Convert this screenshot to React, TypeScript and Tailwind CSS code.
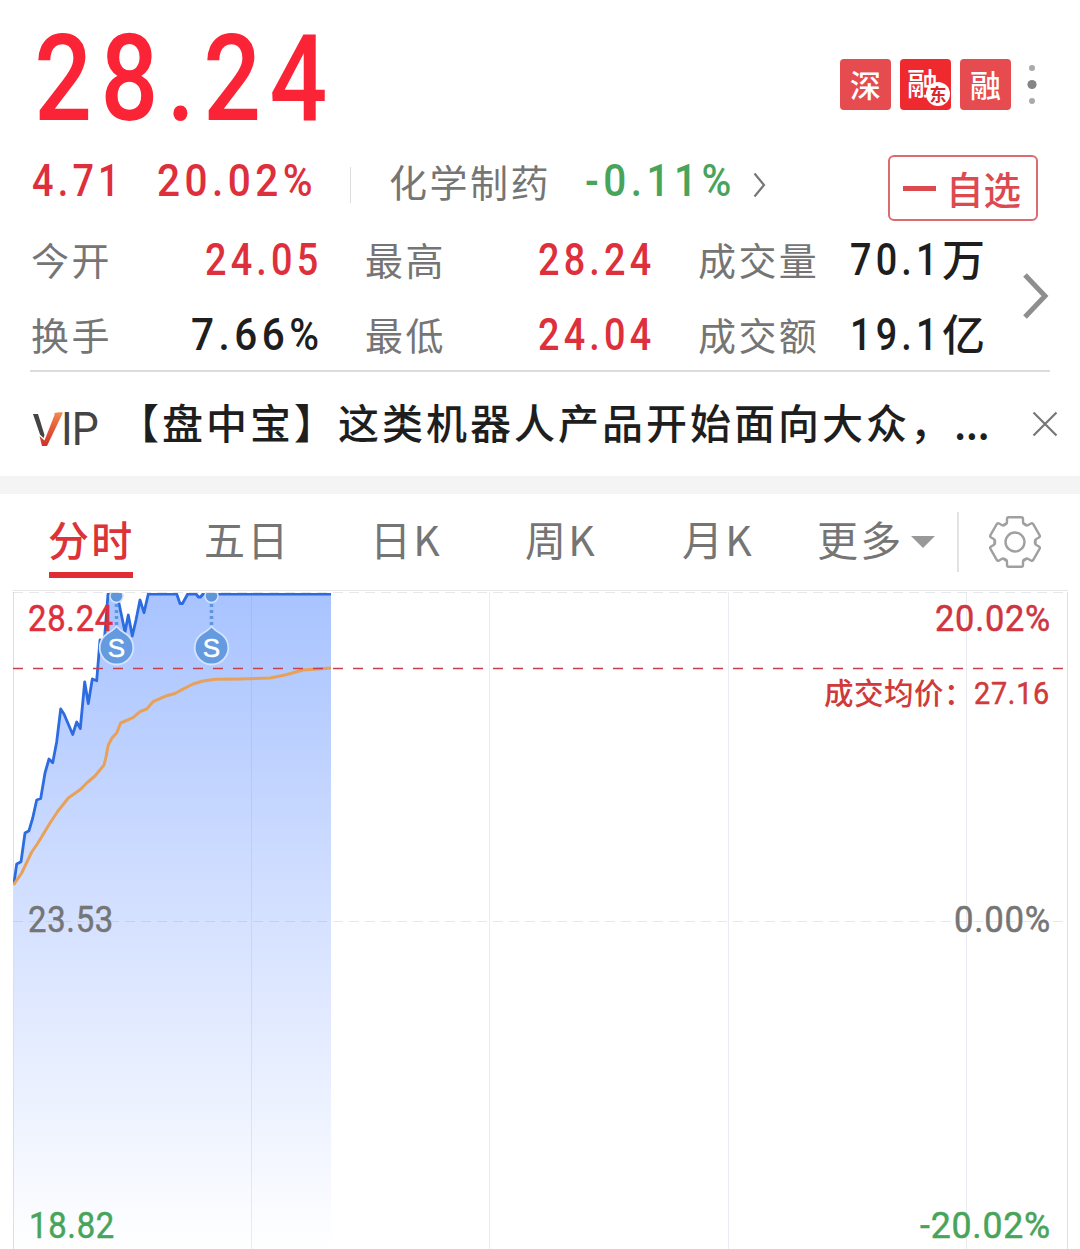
import { clsx } from 'clsx';

const TABS = [
  { label: '五日', width: 'w-[166px]' },
  { label: '日K', width: 'w-[155px]' },
  { label: '周K', width: 'w-[157px]' },
  { label: '月K', width: 'w-[135px]' },
];

const PRICE_LINE =
  '14,883 16.7,864 21,861.7 25,833 29,830.7 32.7,818 36.7,800 40.7,798.5 45,773 49,759 52.7,762.7 56.7,741.7 60.7,709 64,714 72.7,734.5 76.7,722 80.3,728.5 84.7,682 88.3,703.5 92.3,679 96.7,680.7 100,640 104,645 108,594 117,594 125,632 128.3,615 132.3,636 136,620 140,600 144,612.7 148.3,594 176.7,594 180,603.5 182.5,603.5 187.7,594 196,594 198.5,597 200.5,597 203,594 331,594';

const AVG_LINE =
  '13.5,885 21.7,873 31.7,852 37.3,844 50,823 58,811 68.3,798 81,789 86.7,783 95,776 104,765 106,757 108.3,745 112,738 116.7,733 120.7,723 133,717.7 140,711.7 146.7,709 153,701.7 166.7,695.7 175,693.5 180,690.7 193,684 203,681 215,679.3 240,679 270,678 285,675 303,670 331,668';

function Num({ children, className = 'text-[45px] tracking-[5px]' }: { children: string; className?: string }) {
  return (
    <span
      className={clsx(
        "block origin-left whitespace-nowrap font-['Roboto',sans-serif] font-medium leading-none",
        children.endsWith('%') ? 'scale-x-[0.9]' : 'scale-x-[0.84]',
        className,
      )}
    >
      {children}
    </span>
  );
}

function Badge({ children }: { children: string }) {
  return (
    <div className="flex h-[51px] w-[51px] items-center justify-center rounded-[4px] bg-[#e64b50] pb-[2px] text-[31px] font-medium leading-none text-white">
      {children}
    </div>
  );
}

function Header() {
  return (
    <header className="px-[31px]">
      <div className="flex h-[140px] justify-between pt-[19px]">
        <Num className="pl-[4px] text-[121px] tracking-[10px] text-[#fa2436]">28.24</Num>
        <div className="flex gap-[9px] pr-[12px] pt-[40px]">
          <Badge>深</Badge>
          <div className="relative h-[51px] w-[51px] rounded-[4px] bg-[#ee2a2e] pl-[7px] pt-[7px] text-[31px] font-medium leading-none text-white">
            融
            <span className="absolute left-[26px] top-[23px] flex h-6 w-6 items-center justify-center rounded-full bg-white pb-px text-[17px] font-bold leading-none text-[#d8262b]">
              东
            </span>
          </div>
          <Badge>融</Badge>
          <svg className="ml-[7px] h-[51px] w-[10px]" viewBox="0 0 10 51">
            <circle cx="5" cy="9" r="3" fill="#aaa" />
            <circle cx="5" cy="25.5" r="4.6" fill="#858585" />
            <circle cx="5" cy="42" r="3" fill="#aaa" />
          </svg>
        </div>
      </div>

      <div className="flex h-[86px] items-start pt-[18px]">
        <div className="w-[126px] pl-px text-[#dd2f3c]">
          <Num>4.71</Num>
        </div>
        <div className="w-[193px] text-[#dd2f3c]">
          <Num>20.02%</Num>
        </div>
        <div className="mt-[9px] h-[36px] w-px bg-[#ddd]" />
        <div className="ml-[38px] mt-[4px] w-[196px] text-[38px] leading-none tracking-[2.5px] text-[#757575]">化学制药</div>
        <div className="w-[168px] text-[#48a45a]">
          <Num>-0.11%</Num>
        </div>
        <svg className="mt-[14px] h-[26px] w-[13px]" viewBox="0 0 13 26" fill="none" stroke="#777" strokeWidth="2.2">
          <path d="M1.5 1.5 L11 13 L1.5 24.5" />
        </svg>
        <button className="-mt-[3px] ml-[122px] flex h-[66px] w-[150px] shrink-0 items-center rounded-[6px] border-2 border-[#dd6a6f] pl-[13px] text-[#dc4a50]">
          <span className="h-[5px] w-[33px] bg-[#dc4a50]" />
          <span className="ml-[10px] text-[37.5px] font-medium leading-none">自选</span>
        </button>
      </div>
    </header>
  );
}

function StatLabel({ children }: { children: string }) {
  return <div className="pt-[3px] text-[38px] leading-none tracking-[2.4px] text-[#757575]">{children}</div>;
}

function Stats() {
  return (
    <section className="mx-[30px] flex h-[146px] border-b-2 border-[#dcdcdc] pt-[11px]">
      <div className="grid h-[133px] grid-cols-[160px_174px_173px_160px_152px_172px] grid-rows-[75px_58px] pl-px text-[#dd2f3c]">
        <StatLabel>今开</StatLabel>
        <div className="pl-[14px]">
          <Num>24.05</Num>
        </div>
        <StatLabel>最高</StatLabel>
        <Num>28.24</Num>
        <StatLabel>成交量</StatLabel>
        <div className="flex text-[#1e1e1e]">
          <div className="w-[92px]">
            <Num>70.1</Num>
          </div>
          <span className="-mt-px text-[43px] font-medium leading-none">万</span>
        </div>
        <StatLabel>换手</StatLabel>
        <div className="text-[#1e1e1e]">
          <Num>7.66%</Num>
        </div>
        <StatLabel>最低</StatLabel>
        <Num>24.04</Num>
        <StatLabel>成交额</StatLabel>
        <div className="flex text-[#1e1e1e]">
          <div className="w-[92px]">
            <Num>19.1</Num>
          </div>
          <span className="-mt-px text-[43px] font-medium leading-none">亿</span>
        </div>
      </div>
      <svg className="mt-[36px] h-[46px] w-[28px] shrink-0" viewBox="0 0 28 46" fill="none" stroke="#8e8e8e" strokeWidth="5">
        <path d="M3 2 L23 23 L3 44" />
      </svg>
    </section>
  );
}

function VipBar() {
  return (
    <section className="flex h-[104px] items-center pl-[33px] text-[#1e1e1e]">
      <div className="flex w-[85px] items-start pt-[9px]">
        <svg className="h-[34px] w-[30px]" viewBox="0 0 30 34">
          <defs>
            <linearGradient id="tick" x1="0" y1="0" x2="0" y2="1">
              <stop offset="0" stopColor="#f08a50" />
              <stop offset="0.4" stopColor="#e8603a" />
              <stop offset="1" stopColor="#cf3228" />
            </linearGradient>
          </defs>
          <path d="M0 2 H5 L11.500 23 L10.500 26 L7 22.500 Z" fill="#444" />
          <path d="M6.500 24 L11.500 28.500 L21.500 3 V1 Q26 0 30 0.500 L14 34 H9 Z" fill="url(#tick)" />
        </svg>
        <span className="-ml-[2px] origin-left scale-x-[0.93] font-['Roboto',sans-serif] text-[46px] font-normal leading-[34px] tracking-[-1px] text-[#444]">
          IP
        </span>
      </div>
      <div className="-mt-[5px] flex w-[836px] whitespace-nowrap text-[41px] font-medium leading-none tracking-[3px]">
        【盘中宝】这类机器人产品开始面向大众，<span className="tracking-[-0.5px]">...</span>
      </div>
      <svg className="ml-[78px] h-[26px] w-[26px]" viewBox="0 0 26 26" stroke="#777" strokeWidth="2.2">
        <path d="M1.5 1.5 L24.5 24.5 M24.5 1.5 L1.5 24.5" />
      </svg>
    </section>
  );
}

// one tooth and half of its two gaps, repeated every 60 degrees
const TOOTH = 'M-11 -17.300 Q-8 -17.500 -8 -20 V-23 Q-8 -24.700 -6.300 -24.700 H6.300 Q8 -24.700 8 -23 V-20 Q8 -17.500 11 -17.300';

function Gear() {
  return (
    <svg className="h-[54px] w-[54px]" viewBox="-27 -27 54 54" fill="none" stroke="#a0a0a0" strokeWidth="2.4" strokeLinecap="round">
      <circle r="9.5" />
      {[0, 60, 120, 180, 240, 300].map((angle) => (
        <path key={angle} d={TOOTH} transform={`rotate(${angle})`} />
      ))}
    </svg>
  );
}

function Tabs() {
  return (
    <nav className="flex h-[96px] items-start whitespace-nowrap pl-[49px] pt-[24px] text-[41px] leading-none tracking-[2.2px] text-[#757575]">
      <div className="mr-[71px] h-[60px] w-[84px] border-b-[6px] border-[#e02d33] font-medium text-[#dc3338]">
        <span className="-ml-px">分时</span>
      </div>
      {TABS.map((t) => (
        <div key={t.label} className={t.width}>
          {t.label}
        </div>
      ))}
      <div className="w-[94px]">更多</div>
      <svg className="mt-[18px] h-[12px] w-[24px]" viewBox="0 0 24 12">
        <path d="M0 0 H24 L12 12 Z" fill="#999" />
      </svg>
      <div className="-mt-[6px] ml-[22px] h-[60px] w-[2px] bg-[#e2e2e2]" />
      <div className="-mt-[3px] ml-[29px]">
        <Gear />
      </div>
    </nav>
  );
}

function SellMarker({ x }: { x: number }) {
  return (
    <g transform={`translate(${x} 0)`}>
      <path d="M0 604 V626" stroke="#5f95dc" strokeWidth="3.5" strokeDasharray="3 3" />
      <circle cy="596" r="6.5" fill="#5f97de" stroke="#d3e4fb" strokeWidth="1.5" />
      <path
        d="M0 626.500 Q4 631 9 633.500 A16.800 16.800 0 1 1 -9 633.500 Q-4 631 0 626.500 Z"
        fill="#639ae0"
        stroke="#d3e4fb"
        strokeWidth="1.8"
      />
      <text y="657" textAnchor="middle" fill="#fff" stroke="#fff" strokeWidth="0.5" fontSize="26" className="font-['Liberation_Sans',sans-serif]">
        S
      </text>
    </g>
  );
}

function AxisLabel({ x, y, width, fill, children }: { x: number; y: number; width: number; fill: string; children: string }) {
  return (
    <text
      x={x}
      y={y}
      textLength={width}
      lengthAdjust="spacingAndGlyphs"
      fill={fill}
      stroke={fill}
      strokeWidth="0.5"
      fontSize="36"
      letterSpacing="0.8"
      className="font-['Roboto',sans-serif]"
    >
      {children}
    </text>
  );
}

function Chart() {
  return (
    <svg className="block h-[659px] w-full" viewBox="0 590 1080 659" fill="none">
      <defs>
        <linearGradient id="area" x1="0" y1="593" x2="0" y2="1249" gradientUnits="userSpaceOnUse">
          <stop offset="0" stopColor="#a8c3ff" />
          <stop offset="0.5" stopColor="#d5e1ff" />
          <stop offset="1" stopColor="#ffffff" />
        </linearGradient>
        <clipPath id="plot">
          <rect x="13" y="593" width="318" height="656" />
        </clipPath>
      </defs>
      <path d="M13 590.5 H1068" stroke="#e6e6e6" />
      <polygon points={`${PRICE_LINE} 331,1249 14,1249`} fill="url(#area)" />
      <path d="M13.500 592 V1249 M1067.500 592 V1249" stroke="#dcdfe4" />
      <path d="M251.500 592 V1249 M489.500 592 V1249 M728.500 592 V1249 M966.500 592 V1249" stroke="#8090b0" strokeOpacity="0.17" />
      <path d="M13 592.500 H1068 M13 921.500 H1068" stroke="#8090a0" strokeOpacity="0.2" strokeDasharray="10 6" />
      <g clipPath="url(#plot)">
        <polyline points={PRICE_LINE} stroke="#2c6be0" strokeWidth="2.8" strokeLinejoin="round" />
        <polyline points={AVG_LINE} stroke="#e8a158" strokeWidth="3" strokeLinejoin="round" />
      </g>
      <AxisLabel x={28} y={631} width={86} fill="#dd2f3c">28.24</AxisLabel>
      <g clipPath="url(#plot)">
        <SellMarker x={116.5} />
        <SellMarker x={211.5} />
      </g>
      <path d="M13 668.500 H1067" stroke="#c8414a" strokeWidth="1.6" strokeDasharray="10 10" />
      <AxisLabel x={935} y={631} width={116} fill="#cf3540">20.02%</AxisLabel>
      <text x="824" y="703.500" fill="#cf3a3a" fontSize="29.500" fontWeight="500" letterSpacing="0.5" className="font-['Noto_Sans_CJK_SC',sans-serif]">
        成交均价：
      </text>
      <text x="974" y="704" textLength="76" lengthAdjust="spacingAndGlyphs" fill="#cf3a3a" stroke="#cf3a3a" strokeWidth="0.5" fontSize="32" letterSpacing="0.8" className="font-['Roboto',sans-serif]">
        27.16
      </text>
      <AxisLabel x={28} y={932} width={86} fill="#757575">23.53</AxisLabel>
      <AxisLabel x={954} y={932} width={97} fill="#757575">0.00%</AxisLabel>
      <AxisLabel x={29} y={1238} width={86} fill="#48a45a">18.82</AxisLabel>
      <AxisLabel x={920} y={1238} width={131} fill="#48a45a">-20.02%</AxisLabel>
    </svg>
  );
}

export default function App() {
  return (
    <div className="h-[1249px] w-[1080px] overflow-hidden bg-white font-['Noto_Sans_CJK_SC',sans-serif]">
      <Header />
      <Stats />
      <VipBar />
      <div className="h-[18px] bg-[#f4f4f4]" />
      <Tabs />
      <Chart />
    </div>
  );
}
